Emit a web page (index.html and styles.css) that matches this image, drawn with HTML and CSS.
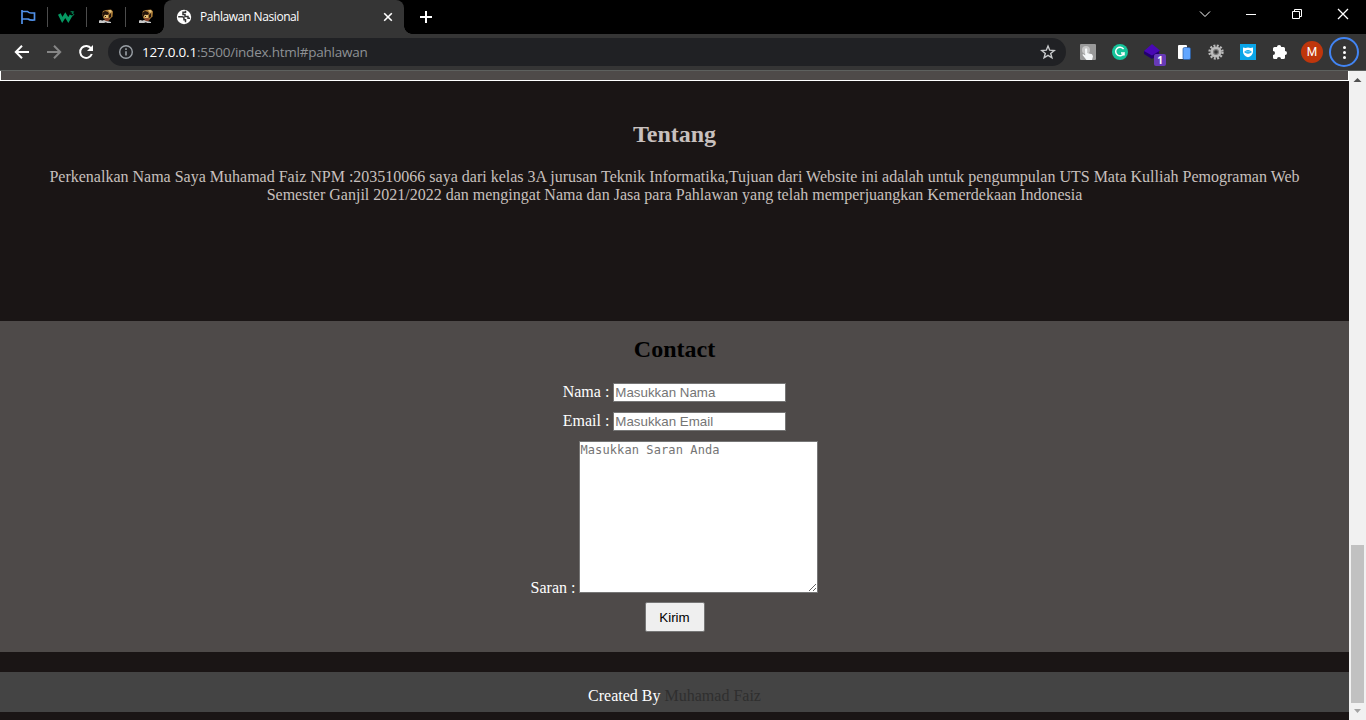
FILE: index.html
```html
<!DOCTYPE html>
<html lang="id">
<head>
<meta charset="utf-8">
<title>Pahlawan Nasional</title>
<link rel="stylesheet" href="styles.css">
</head>
<body>
<div class="browser">
  <div class="tabs">
    <div class="pins">
      <div class="pin"><svg width="16" height="16" viewBox="0 0 16 16" fill="none" stroke="#5090e8" stroke-width="1.7"><path d="M2 1v14M2 2.500h5.500Q9 4 11 4h3.500v7Q10 11.500 8 10H2"/></svg></div>
      <div class="pin"><svg width="18" height="16" viewBox="0 0 18 16" fill="none" stroke="#059862"><path stroke-width="3" d="M1.300 5l3 6 3-4.800 3 4.800 2.800-4.800"/><path stroke-width="1" d="M12.600 2.800h3l-1.500 1.500c2.400.2 1.900 2.800-.4 2.300"/></svg></div>
      <div class="pin"><svg width="16" height="16" viewBox="0 0 16 16"><use href="#hero"/></svg></div>
      <div class="pin"><svg width="16" height="16" viewBox="0 0 16 16"><g id="hero"><path fill="#a67835" d="M5 2l3-1 5-.5 2 2-.5 5-3 3-6-1L4 5z"/><path fill="#e5c178" d="M10 1h3l1 2-2 1zM6 6h4v4H7z"/><path fill="#24150e" d="M4 4l3-2 3 1 1 2-2 1-2-.5L5 8zM7 7h1v1H7zM11 6l2-2v4l-2 1z"/><path fill="#8b482e" d="M7 9h3l2 1.500-2 2H6z"/><path fill="#c9c9c9" d="M1 11.500l2-.5 1 .8 2-.8 2 1 3 .5 2 .5v1H9l-1-.8-2 .8H1z"/></g></svg></div>
    </div>
    <div class="tab">
      <svg width="16" height="16" viewBox="0 0 16 16"><circle cx="8" cy="8" r="7.200" fill="#fff"/><path d="M2.200 7.800H6q2 0 2 2v1h1.500v2.500M9.500 1.800v1.500H7v2.200h2v2h3v1.800h2" fill="none" stroke="#353535" stroke-width="1.500"/></svg>
      <span class="title">Pahlawan Nasional</span>
      <svg width="10" height="10" viewBox="0 0 10 10" stroke="#fff" stroke-width="1.6"><path d="M1.200 1.200l7.600 7.600M8.800 1.200L1.200 8.800"/></svg>
    </div>
    <svg class="plus" width="12" height="12" viewBox="0 0 12 12" stroke="#fff" stroke-width="2"><path d="M6 0v12M0 6h12"/></svg>
    <div class="window-buttons">
      <svg width="12" height="12" viewBox="0 0 12 12"><path d="M1 3.500l5 5 5-5"/></svg>
      <svg width="12" height="12" viewBox="0 0 12 12"><path d="M1 6.500h10"/></svg>
      <svg width="12" height="12" viewBox="0 0 12 12"><path d="M1.500 3.500h7v7h-7zM3.500 3.500v-2h7v7h-2"/></svg>
      <svg width="12" height="12" viewBox="0 0 12 12"><path stroke-width="1.3" d="M1 1l10 10M11 1L1 11"/></svg>
    </div>
  </div>
  <div class="toolbar">
    <div class="navigation">
      <svg width="16" height="16" viewBox="0 0 16 16" fill="none" stroke="#fff" stroke-width="2"><path d="M15 8H2.500M8 1.800L1.800 8 8 14.200"/></svg>
      <svg width="16" height="16" viewBox="0 0 16 16" fill="none" stroke="#868686" stroke-width="2"><path d="M1 8h12.500M8 1.800L14.200 8 8 14.200"/></svg>
      <svg width="16" height="16" viewBox="0 0 16 16"><path d="M13.100 4.500A6 6 0 1 0 13.800 10" fill="none" stroke="#fff" stroke-width="2"/><path fill="#fff" d="M15 1v6H9z"/></svg>
    </div>
    <div class="address">
      <svg width="16" height="16" viewBox="0 0 16 16" fill="none" stroke="#9aa0a6"><circle cx="8" cy="8" r="6.300" stroke-width="1.4"/><path stroke-width="1.6" d="M8 7.200v4.300M8 4.300v1.600"/></svg>
      <span class="url"><span class="host">127.0.0.1</span>:5500/index.html#pahlawan</span>
      <svg width="16" height="16" viewBox="0 0 16 16" fill="none" stroke="#c8cacc" stroke-width="1.4"><path d="M8 2l1.700 4.200 4.500.3-3.500 2.900 1.200 4.400L8 11.300l-3.900 2.500 1.200-4.400-3.500-2.900 4.500-.3z"/></svg>
    </div>
    <div class="extensions">
      <svg width="16" height="16" viewBox="0 0 16 16"><rect width="16" height="16" rx="1" fill="#999"/><circle cx="6" cy="6" r="4" fill="#c5c5c5"/><path fill="#f5f7f8" d="M5 5q1.500-1.500 2.200.3V9l4.800 1.300 1 2-1 3.700H6.500L2.300 10.700q1-1.300 2.900.7z"/></svg>
      <svg width="16" height="16" viewBox="0 0 16 16"><circle cx="8" cy="8" r="8" fill="#15c39a"/><path d="M11.600 5.200A4.300 4.300 0 1 0 12 9H9M12 8.200v3.200" fill="none" stroke="#fff" stroke-width="1.5"/></svg>
      <div class="box"><svg width="16" height="16" viewBox="0 0 16 16"><path fill="#23006f" d="M0 7l15 0v3l-7 5-8-5z"/><path fill="#4908b5" d="M8 0l8 6.500-8 5L0 7z"/></svg><span class="badge">1</span></div>
      <svg width="16" height="16" viewBox="0 0 16 16"><rect x="2" y="1" width="9" height="14" rx="1" fill="#fff"/><rect x="7" y="3.500" width="7.500" height="12" rx="1.5" fill="#62a6ff" stroke="#285ba4" stroke-width=".7"/></svg>
      <svg width="16" height="16" viewBox="0 0 16 16"><circle cx="8" cy="8" r="6.500" fill="none" stroke="#bbb" stroke-width="2.3" stroke-dasharray="2 1.403"/><circle cx="8" cy="8" r="4.300" fill="#777" stroke="#bbb" stroke-width="2.6"/><circle cx="8" cy="8" r="1.800" fill="#353535"/></svg>
      <svg width="16" height="16" viewBox="0 0 16 16"><path fill="#0aa5e8" d="M0 0h16v16H0z"/><path fill="#fff" d="M3 3.500q2.500.8 5 0 2.500.8 5 0V8q-.5 4-5 5.300Q3.500 12 3 8z"/><path fill="#0aa5e8" d="M4 8q4-4 8 0-4 3.300-8 0z"/><path d="M5.500 7.800h5" stroke="#75d2fa"/></svg>
      <svg width="16" height="16" viewBox="0 0 16 16"><path fill="#fff" d="M1 4.500Q1 3 2.500 3H5a2.100 2.100 0 1 1 4.200 0h2.300Q13 3 13 4.500V7a2 2 0 1 1 0 4v2.500q0 1.500-1.500 1.500H9a2 2 0 0 0-4 0H2.500Q1 15 1 13.500V11a2 2 0 0 0 0-4z"/></svg>
    </div>
    <div class="avatar">M</div>
    <div class="more"><i></i><i></i><i></i></div>
  </div>
  <div class="viewport">
    <main class="page">
      <div class="previous"></div>
      <section class="about">
        <h2>Tentang</h2>
        <p>Perkenalkan Nama Saya Muhamad Faiz NPM :203510066 saya dari kelas 3A jurusan Teknik Informatika,Tujuan dari Website ini adalah untuk pengumpulan UTS Mata Kulliah Pemograman Web<br>Semester Ganjil 2021/2022 dan mengingat Nama dan Jasa para Pahlawan yang telah memperjuangkan Kemerdekaan Indonesia</p>
      </section>
      <section class="contact">
        <h2>Contact</h2>
        <form>
          <label class="row"><span>Nama :</span><input type="text" placeholder="Masukkan Nama"></label>
          <label class="row"><span>Email :</span><input type="text" placeholder="Masukkan Email"></label>
          <label class="row message"><span>Saran :</span><textarea placeholder="Masukkan Saran Anda"></textarea></label>
          <button type="button">Kirim</button>
        </form>
      </section>
      <footer>Created By <span class="author">Muhamad Faiz</span></footer>
    </main>
    <div class="scrollbar">
      <svg width="17" height="17" viewBox="0 0 17 17"><path fill="#505050" d="M4.500 11h8l-4-4z"/></svg>
      <div class="thumb"></div>
      <svg width="17" height="17" viewBox="0 0 17 17"><path fill="#a3a3a3" d="M5 6h7l-3.500 4z"/></svg>
    </div>
  </div>
</div>
</body>
</html>
```

FILE: styles.css
```css
* { box-sizing: border-box; }
body { margin: 0; overflow: hidden; }
svg { display: block; flex: none; }
.browser { display: flex; flex-direction: column; width: 1366px; height: 720px; font-family: "Open Sans", "Noto Sans", sans-serif; }
.tabs { display: flex; height: 34px; background: #000; flex: none; }
.pins { display: flex; width: 164px; padding-left: 9px; }
.pin { display: flex; align-items: center; justify-content: center; flex: none; width: 39px; height: 20px; margin-top: 7px; border-right: 1px solid #4c4c4c; }
.pin:last-child { border-right: 0; }
.tab { position: relative; display: flex; align-items: center; width: 240px; padding: 0 11px 0 12px; background: #353535; border-radius: 8px 8px 0 0; color: #fff; }
.tab::before, .tab::after { content: ""; position: absolute; bottom: 0; width: 8px; height: 8px; }
.tab::before { left: -8px; background: radial-gradient(circle at 0 0, #000 7.5px, #353535 8px); }
.tab::after { right: -8px; background: radial-gradient(circle at 100% 0, #000 7.5px, #353535 8px); }
.title { flex: 1; margin-left: 8px; font-size: 12px; letter-spacing: -.42px; line-height: 34px; }
.plus { margin: 11px 0 0 16px; }
.window-buttons { display: flex; gap: 34px; margin: 8px 17px 0 auto; fill: none; stroke: #fff; }
.toolbar { display: flex; align-items: center; height: 37px; flex: none; padding: 0 7px 0 14px; background: #353535; border-bottom: 1px solid #5d605e; }
.navigation { display: flex; gap: 16px; width: 94px; }
.address { display: flex; align-items: center; width: 958px; height: 28px; padding: 0 10px; border-radius: 14px; background: #202124; }
.url { flex: 1; margin-left: 8px; color: #8e9195; font-size: 13.5px; line-height: 29px; letter-spacing: -.23px; }
.host { color: #fff; }
.extensions { display: flex; gap: 16px; margin-left: 14px; }
.box { position: relative; }
.badge { position: absolute; left: 10px; top: 10px; width: 12px; height: 12px; border-radius: 2px; background: #673ab7; color: #fff; font: bold 10px/12px "Open Sans", sans-serif; text-align: center; }
.avatar { width: 22px; height: 22px; margin-left: 13px; border-radius: 50%; background: #bf360c; color: #fff; font: 12px/22px Roboto, sans-serif; text-align: center; }
.more { display: flex; flex-direction: column; align-items: center; justify-content: center; gap: 2px; width: 30px; height: 30px; margin-left: 6px; border: 2px solid #4285f4; border-radius: 50%; }
.more i { width: 3px; height: 3px; border-radius: 50%; background: #fff; }
.viewport { display: flex; flex: 1; min-height: 0; }
.page { width: 1349px; background: #1a1515; color: #fff; font: 16px/18px "Liberation Serif", serif; text-align: center; }
.previous { height: 10px; background: #4e4a49; border: 1px solid #fff; border-top: 0; }
.about { height: 240px; padding-top: 40px; color: #c8c0be; }
h2 { margin: 0; font-size: 24px; line-height: 27px; }
.about p { margin: 20px 0 0; white-space: nowrap; }
.contact { height: 331px; padding-top: 15px; background: #4e4a49; }
.contact h2 { color: #000; }
form { display: flex; flex-direction: column; align-items: center; padding-top: 20px; }
.row { display: flex; gap: 4px; margin-bottom: 10px; line-height: 18px; }
.row input { width: 173px; height: 19px; padding: 1px; border: 1px solid #767676; font: 13.333px "Liberation Sans", sans-serif; }
.message { align-items: flex-end; margin-bottom: 9px; }
.message span { height: 14px; }
textarea { width: 239px; height: 152px; padding: 1px 0; border: 1px solid #767676; font: 12px/15px "DejaVu Sans Mono", monospace; letter-spacing: .1px; }
::placeholder { color: #757575; }
button { width: 60px; height: 30px; padding: 0; border: 1px solid #767676; border-radius: 2px; background: #efefef; color: #000; font: 13.333px "Liberation Sans", sans-serif; }
footer { height: 40px; margin-top: 20px; padding-top: 15px; background: #444; }
.author { color: #2f2f2f; }
.scrollbar { display: flex; flex-direction: column; width: 17px; background: #f1f1f1; }
.thumb { width: 13px; height: 158px; margin: auto 2px 0; background: #c1c1c1; }
```
